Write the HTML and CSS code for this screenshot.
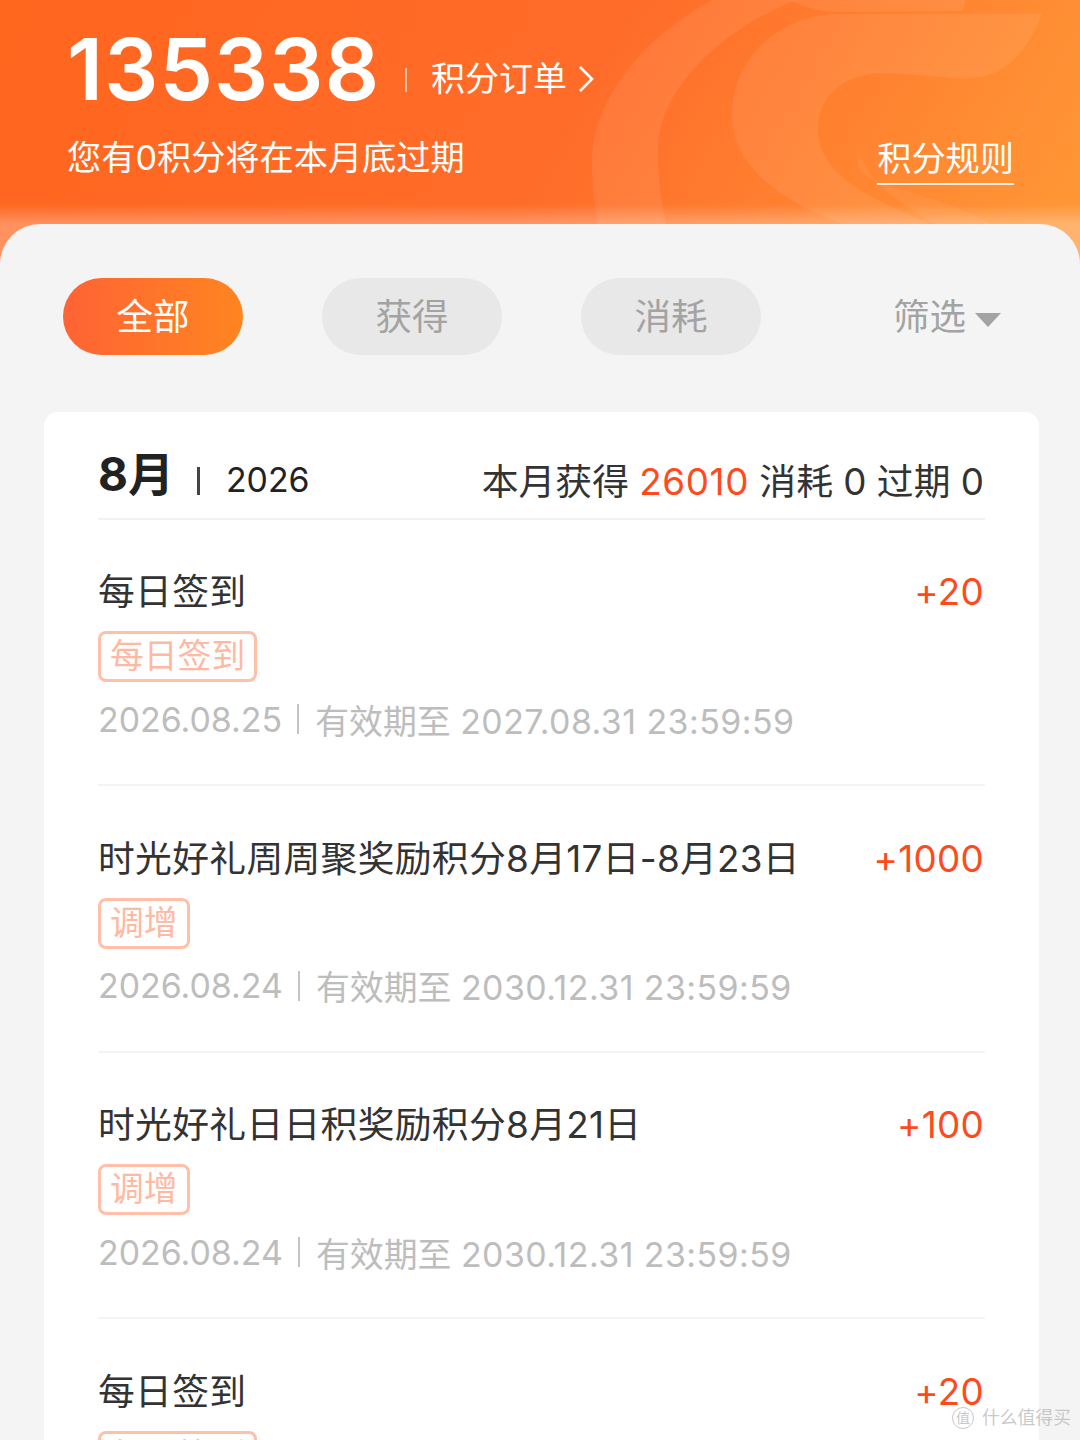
FILE: index.html
```html
<!DOCTYPE html>
<html lang="zh-CN">
<head>
<meta charset="UTF-8" />
<meta name="viewport" content="width=device-width, initial-scale=1" />
<title>积分明细</title>
<link rel="stylesheet" href="styles.css">
</head>
<body>

<div class="topbar">
  <svg class="topbar-art" width="1080" height="264" viewBox="0 0 1080 264">
    <path fill="#fff" fill-opacity="0.08" d="M712 0C640 40 592 100 592 165C592 190 596 210 600 240L670 240C660 200 658 180 658 150C658 90 720 30 796 0Z" />
    <path fill="#fff" fill-opacity="0.08" d="M790 0C805 8 820 12 840 12L962 11L966 0Z" />
    <path fill="#fff" fill-opacity="0.08" d="M1042 14L830 14C770 20 732 65 732 115C732 170 790 215 900 240L960 240C900 205 820 190 818 130C818 95 845 73 885 73C930 74 960 82 985 76C1015 68 1032 40 1042 14Z" />
    <path fill="#fff" fill-opacity="0.06" d="M858 150C855 165 862 178 885 185C930 198 990 215 1010 240L960 240C915 210 870 190 858 150Z" />
  </svg>
  <div class="points-row">
    <span class="points">135338</span>
    <span class="points-sep"></span>
    <span class="points-link">积分订单</span>
    <svg class="points-arrow" width="18" height="28" viewBox="0 0 18 28"><path d="M3 2L15 14L3 26" fill="none" stroke="#fff" stroke-width="2.6" /></svg>
  </div>
  <div class="expire-row">
    <p>您有0积分将在本月底过期</p>
    <span class="rules">积分规则</span>
  </div>
</div>

<div class="panel">
  <div class="tabs">
    <button class="tab tab-on">全部</button>
    <button class="tab">获得</button>
    <button class="tab">消耗</button>
    <div class="filter">筛选<span class="filter-arrow"></span></div>
  </div>

  <div class="card">
    <div class="month-row">
      <div class="month"><b>8月</b><span class="month-sep"></span><span class="year">2026</span></div>
      <div class="summary">本月获得 <em>26010</em> 消耗 0 过期 0</div>
    </div>

    <div class="item">
      <div class="item-top"><span>每日签到</span><span class="plus">+20</span></div>
      <span class="tag">每日签到</span>
      <div class="item-date">2026.08.25<span class="date-sep"></span><span>有效期至 <span class="valid">2027.08.31 23:59:59</span></span></div>
    </div>
    <div class="item">
      <div class="item-top"><span>时光好礼周周聚奖励积分8月17日-8月23日</span><span class="plus">+1000</span></div>
      <span class="tag">调增</span>
      <div class="item-date">2026.08.24<span class="date-sep"></span><span>有效期至 <span class="valid">2030.12.31 23:59:59</span></span></div>
    </div>
    <div class="item">
      <div class="item-top"><span>时光好礼日日积奖励积分8月21日</span><span class="plus">+100</span></div>
      <span class="tag">调增</span>
      <div class="item-date">2026.08.24<span class="date-sep"></span><span>有效期至 <span class="valid">2030.12.31 23:59:59</span></span></div>
    </div>
    <div class="item">
      <div class="item-top"><span>每日签到</span><span class="plus">+20</span></div>
      <span class="tag">每日签到</span>
    </div>
  </div>
</div>

<div class="watermark">
  <span class="watermark-logo">值</span>
  <span>什么值得买</span>
</div>

</body>
</html>
```

FILE: styles.css
```css
* {
  box-sizing: border-box;
}
html, body {
  margin: 0;
  height: 1440px;
  overflow: hidden;
}
body {
  position: relative;
  width: 1080px;
  background-color: #f4f4f4;
  font-family: Inter, "Noto Sans CJK SC", sans-serif;
  color: #333;
}
p {
  margin: 0;
}

/* orange header */
.topbar {
  position: relative;
  height: 264px;
  padding: 25px 66px 0 67px;
  color: #fff;
  overflow: hidden;
  background-color: #ff6a22;
  background-image:
    linear-gradient(to bottom, rgba(255, 255, 255, 0) 204px, rgba(255, 255, 255, 0.28) 224px),
    linear-gradient(120deg, #ff661e 0%, #ff6c2a 52%, #ff9636 96%);
}
.topbar-art {
  position: absolute;
  top: 0;
  left: 0;
}
.points-row {
  position: relative;
  display: flex;
  align-items: center;
  height: 90px;
}
.points {
  width: 313px;
  font-size: 85px;
  line-height: 90px;
  font-weight: 600;
  letter-spacing: 1.2px;
}
.points-sep {
  width: 2px;
  height: 24px;
  margin: 20px 24px 0 25px;
  background-color: rgba(255, 255, 255, 0.6);
}
.points-link {
  font-size: 34px;
  line-height: 44px;
  margin-top: 18px;
}
.points-arrow {
  margin: 18px 0 0 10px;
}
.expire-row {
  position: relative;
  display: flex;
  justify-content: space-between;
  align-items: flex-start;
  margin-top: 20px;
  font-size: 34.2px;
  line-height: 46px;
}
.rules {
  margin-top: 1px;
  padding-bottom: 1px;
  border-bottom: 2px solid rgba(255, 255, 255, 0.85);
}

/* grey panel */
.panel {
  position: relative;
  height: 1216px;
  margin-top: -40px;
  padding: 54px 41px 0 44px;
  overflow: hidden;
  background-color: #f4f4f4;
  border-radius: 40px 40px 0 0;
}
.tabs {
  display: flex;
  align-items: center;
  gap: 79px;
  padding-left: 19px;
}
.tab {
  width: 180px;
  height: 77px;
  padding: 0 0 4px;
  border: none;
  border-radius: 39px;
  background-color: #e8e8e8;
  color: #a3a3a3;
  font-family: inherit;
  font-size: 36.5px;
}
.tab-on {
  background-image: linear-gradient(90deg, #ff6334, #ff8520);
  color: #fff;
}
.filter {
  display: flex;
  align-items: center;
  margin-left: 53px;
  padding-bottom: 4px;
  font-size: 36.5px;
  color: #a3a3a3;
}
.filter-arrow {
  width: 0;
  height: 0;
  margin: 10px 0 0 9px;
  border-left: 13px solid transparent;
  border-right: 13px solid transparent;
  border-top: 14px solid #a3a3a3;
}

/* white list */
.card {
  margin-top: 57px;
  height: 1100px;
  padding: 0 54px;
  background-color: #fff;
  border-radius: 14px 14px 0 0;
}
.month-row {
  display: flex;
  justify-content: space-between;
  align-items: flex-end;
  height: 107.5px;
  padding: 0 1px 14px 0;
  border-bottom: 2px solid #f2f2f2;
}
.month {
  display: flex;
  align-items: center;
  color: #222;
}
.month b {
  font-size: 46px;
  line-height: 60px;
  font-weight: 700;
  margin-top: -8px;
}
.month-sep {
  width: 3px;
  height: 28px;
  margin: 6px 26px 0 23px;
  background-color: #444;
}
.year {
  font-size: 33.8px;
  margin-top: 4px;
}
.summary {
  margin-bottom: -3px;
  font-size: 36.8px;
  line-height: 50px;
  color: #333;
}
.summary em {
  font-style: normal;
  letter-spacing: 0.6px;
  color: #ff4a1c;
}
.item {
  height: 266.5px;
  padding-top: 46.5px;
  border-bottom: 2px solid #f4f4f4;
}
.item-top {
  display: flex;
  justify-content: space-between;
  font-size: 36.8px;
  line-height: 52px;
  letter-spacing: 0.3px;
  padding-right: 1px;
}
.plus {
  color: #ff4a1c;
}
.tag {
  display: inline-block;
  height: 51px;
  margin-top: 13px;
  padding: 0 9px;
  border: 3px solid #ffbfa9;
  border-radius: 8px;
  color: #ffb8a1;
  font-size: 33.8px;
  line-height: 44px;
}
.item-date {
  display: flex;
  align-items: center;
  margin-top: 12px;
  height: 50px;
  font-size: 33.9px;
  color: #bdbdbd;
}
.valid {
  letter-spacing: 0.45px;
}
.date-sep {
  width: 2px;
  height: 30px;
  margin: 0 16px 0 15px;
  background-color: #c4c4c4;
}

/* site watermark, sits over the page */
.watermark {
  position: absolute;
  top: 1407px;
  left: 952px;
  display: flex;
  align-items: center;
  gap: 8px;
  font-size: 17.8px;
  line-height: 22px;
  color: rgba(190, 190, 190, 0.85);
}
.watermark-logo {
  width: 22px;
  height: 22px;
  border: 1px solid rgba(190, 190, 190, 0.85);
  border-radius: 50%;
  font-size: 14px;
  line-height: 20px;
  text-align: center;
}
```
